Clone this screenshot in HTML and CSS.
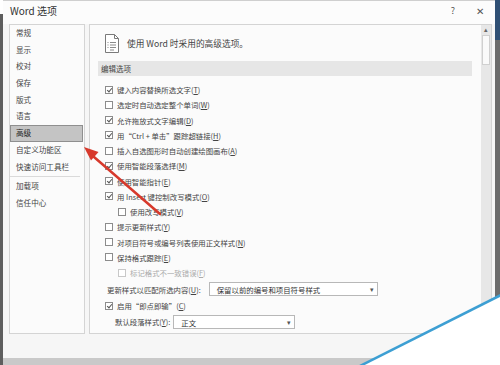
FILE: index.html
```html
<!DOCTYPE html>
<html lang="zh-CN">
<head>
    <meta charset="UTF-8">
    <title>Word 选项</title>
    <link rel="stylesheet" href="styles.css">
</head>
<body>

<div class="screen">
    <div class="edge-left"></div>

    <div class="dialog">
        <div class="titlebar">
            <span class="title">Word 选项</span>
            <span class="help">?</span>
            <span class="close">✕</span>
        </div>

        <div class="content">
            <ul class="nav">
                <li>常规</li>
                <li>显示</li>
                <li>校对</li>
                <li>保存</li>
                <li>版式</li>
                <li>语言</li>
                <li class="active">高级</li>
                <li>自定义功能区</li>
                <li>快速访问工具栏</li>
                <li class="sep"></li>
                <li>加载项</li>
                <li>信任中心</li>
            </ul>

            <div class="main">
                <div class="pane">
                    <div class="pane-header">
                        <svg class="doc-icon" width="14" height="19" viewBox="0 0 14 19">
                            <path d="M0.5 0.5h9l4 4v14h-13z" fill="#fff" stroke="#7a7a7a"/>
                            <path d="M9.5 0.5v4h4" fill="none" stroke="#7a7a7a"/>
                            <path d="M5 8.5h6M5 11h6M5 13.5h6M5 16h4" stroke="#8a8a8a"/>
                            <path d="M2.5 8.5h1M2.5 11h1M2.5 13.5h1" stroke="#8a8a8a"/>
                        </svg>
                        <span>使用 Word 时采用的高级选项。</span>
                    </div>

                    <div class="section">编辑选项</div>

                    <div class="options">
                        <div class="row"><span class="cb on"></span>键入内容替换所选文字(<u>T</u>)</div>
                        <div class="row"><span class="cb"></span>选定时自动选定整个单词(<u>W</u>)</div>
                        <div class="row"><span class="cb on"></span>允许拖放式文字编辑(<u>D</u>)</div>
                        <div class="row"><span class="cb on"></span>用“Ctrl + 单击”跟踪超链接(<u>H</u>)</div>
                        <div class="row"><span class="cb"></span>插入自选图形时自动创建绘图画布(<u>A</u>)</div>
                        <div class="row"><span class="cb on"></span>使用智能段落选择(<u>M</u>)</div>
                        <div class="row"><span class="cb on"></span>使用智能指针(<u>E</u>)</div>
                        <div class="row"><span class="cb on"></span>用 Insert 键控制改写模式(<u>O</u>)</div>
                        <div class="row indent"><span class="cb"></span>使用改写模式(<u>V</u>)</div>
                        <div class="row"><span class="cb"></span>提示更新样式(<u>Y</u>)</div>
                        <div class="row"><span class="cb"></span>对项目符号或编号列表使用正文样式(<u>N</u>)</div>
                        <div class="row"><span class="cb"></span>保持格式跟踪(<u>E</u>)</div>
                        <div class="row indent disabled"><span class="cb"></span>标记格式不一致错误(<u>F</u>)</div>
                        <div class="row select-row">
                            <span class="label">更新样式以匹配所选内容(<u>U</u>):</span>
                            <span class="select wide">保留以前的编号和项目符号样式<i>▾</i></span>
                        </div>
                        <div class="row"><span class="cb on"></span>启用“即点即输”(<u>C</u>)</div>
                        <div class="row select-row small">
                            <span class="label">默认段落样式(<u>Y</u>):</span>
                            <span class="select narrow">正文<i>▾</i></span>
                        </div>
                    </div>
                </div>

                <div class="scrollbar">
                    <span class="arrow">▴</span>
                    <span class="thumb"></span>
                </div>
            </div>
        </div>

        <div class="footer"></div>
        <div class="taskbar"></div>
    </div>

    <div class="edge-right"></div>

    <svg class="overlay" width="500" height="365" viewBox="0 0 500 365">
        <polygon points="500,296 360,366 500,366" fill="#ffffff"/>
        <line x1="501" y1="295" x2="358" y2="367" stroke="#3d9fd3" stroke-width="2.5"/>
        <line x1="160" y1="214" x2="94" y2="157" stroke="#d7392c" stroke-width="2.5" stroke-linecap="round"/>
        <polygon points="84,147 98.5,152 91,160.5" fill="#d7392c"/>
    </svg>
</div>

</body>
</html>
```

FILE: styles.css
```css
body {
    margin: 0;
    font-family: "Noto Sans CJK SC", "Noto Sans", sans-serif;
    color: #444;
    background-color: #fff;
}
.screen {
    position: relative;
    display: flex;
    width: 500px;
    height: 365px;
    overflow: hidden;
}
.edge-left {
    width: 3px;
    background: linear-gradient(#ffffff 0 14px, #5e5e5e 14px);
}
.edge-right {
    width: 5px;
    background: linear-gradient(#2f4f74 0 40px, #6c6c6c 40px);
}
.dialog {
    flex: 1;
    display: flex;
    flex-direction: column;
    background-color: #f6f6f6;
}

/* title bar */
.titlebar {
    height: 24px;
    display: flex;
    align-items: center;
    padding: 0 11px 0 7px;
    background-color: #fcfcfc;
    border-top: 1px solid #cfcfcf;
    box-sizing: border-box;
}
.title {
    font-size: 10px;
    flex: 1;
    color: #333;
    margin-top: -4px;
}
.help {
    font-size: 9px;
    color: #555;
    margin-right: 21px;
    margin-top: -4px;
}
.close {
    font-size: 10px;
    color: #555;
    margin-top: -4px;
}

/* body */
.content {
    display: flex;
    gap: 4px;
    height: 310px;
    padding: 0 3px 0 6px;
}
.nav {
    list-style: none;
    margin: 0;
    padding: 0;
    width: 76px;
    box-sizing: border-box;
    border: 1px solid #d4d4d4;
    background-color: #fbfbfb;
}
.nav li {
    height: 16.7px;
    line-height: 16.7px;
    padding-left: 6px;
    font-size: 7.6px;
    box-sizing: border-box;
}
.nav li.active {
    background-color: #c4c4c4;
    border: 1px solid #8f8f8f;
    line-height: 14.7px;
    padding-left: 5px;
    margin-right: 1px;
    color: #222;
}
.nav li.sep {
    height: 1px;
    margin: 1px 4px 1px 0;
    background-color: #dadada;
}

.main {
    flex: 1;
    display: flex;
    border: 1px solid #d4d4d4;
    background-color: #fbfbfb;
}
.pane {
    flex: 1;
}
.pane-header {
    height: 36px;
    display: flex;
    align-items: center;
    gap: 8px;
    padding-left: 15px;
    font-size: 8.7px;
    box-sizing: border-box;
}
.section {
    height: 15px;
    line-height: 15px;
    margin: 0 9px 0 8px;
    padding-left: 3px;
    background-color: #e6e6e6;
    font-size: 7.5px;
}
.options {
    padding: 6px 0 0 15px;
}
.row {
    height: 15.25px;
    display: flex;
    align-items: center;
    font-size: 7.4px;
    white-space: nowrap;
}
.row u {
    text-decoration: underline;
    text-underline-offset: 1px;
}
.row.indent {
    padding-left: 13px;
}
.row.disabled {
    color: #ababab;
}
.row.disabled .cb {
    border-color: #c8c8c8;
}
.cb {
    position: relative;
    width: 8px;
    height: 8px;
    box-sizing: border-box;
    border: 1px solid #8c8c8c;
    background-color: #fff;
    margin-right: 4px;
}
.cb.on::after {
    content: "";
    position: absolute;
    left: 2px;
    top: 0;
    width: 2px;
    height: 4px;
    border: solid #555;
    border-width: 0 1px 1px 0;
    transform: rotate(40deg);
}
.select-row {
    height: 18px;
}
.select-row.small {
    height: 16px;
    padding-left: 8px;
}
.label {
    margin-left: 2px;
    margin-right: 8px;
}
.select {
    position: relative;
    height: 14px;
    line-height: 13px;
    box-sizing: border-box;
    border: 1px solid #b8b8b8;
    background-color: #fff;
    padding-left: 7px;
    color: #333;
}
.select.wide {
    width: 169px;
}
.select.narrow {
    width: 122px;
    margin-left: -5px;
}
.select i {
    position: absolute;
    right: 3px;
    top: 0;
    font-style: normal;
    font-size: 7px;
    color: #555;
}

.scrollbar {
    width: 10px;
    display: flex;
    flex-direction: column;
    align-items: center;
    background-color: #e7e7e7;
}
.arrow {
    font-size: 7px;
    line-height: 9px;
    color: #666;
    height: 10px;
}
.thumb {
    width: 8px;
    height: 30px;
    box-sizing: border-box;
    background-color: #fafafa;
    border: 1px solid #d0d0d0;
}

.footer {
    flex: 1;
}
.taskbar {
    height: 7px;
    background-color: #c9c9c9;
}

.overlay {
    position: absolute;
    left: 0;
    top: 0;
    pointer-events: none;
}
```
